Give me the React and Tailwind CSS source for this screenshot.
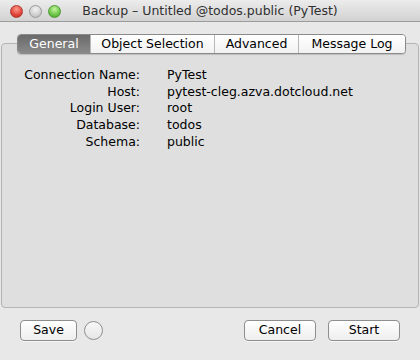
import React from "react"

const font = { fontFamily: '"Lucida Grande", "DejaVu Sans", "Liberation Sans", sans-serif' }

const tabs = ["General", "Object Selection", "Advanced", "Message Log"]
const tabWidths = ["w-[72px]", "w-[124px]", "w-[84px]", "w-[107px]"]

const rows = [
  ["Connection Name:", "PyTest"],
  ["Host:", "pytest-cleg.azva.dotcloud.net"],
  ["Login User:", "root"],
  ["Database:", "todos"],
  ["Schema:", "public"],
]

function Button({ children, className }) {
  return (
    <button className={`h-[21px] rounded-[4px] border border-[#8e8e8e] bg-gradient-to-b from-white to-[#eeeeee] text-[12.5px] text-black shadow-[0_1px_0_rgba(255,255,255,0.6)] ${className}`}>
      {children}
    </button>
  )
}

export default function App() {
  return (
    <div className="w-[420px] h-[360px] bg-[#e8e8e8] flex flex-col overflow-hidden" style={font}>
      {/* title bar */}
      <div className="h-[22px] shrink-0 relative flex items-center bg-gradient-to-b from-[#ececec] to-[#d2d2d2] border-b border-[#9c9c9c]">
        <div className="flex items-center gap-[6px] pl-[10px] pt-[1px]">
          <div className="w-[13px] h-[13px] rounded-full border border-[#b03a32] bg-[radial-gradient(circle_at_50%_30%,#ff9a8c,#e0443a_60%,#b8231c)]" />
          <div className="w-[13px] h-[13px] rounded-full border border-[#9a9a9a] bg-[radial-gradient(circle_at_50%_30%,#f4f4f4,#cfcfcf_60%,#b4b4b4)]" />
          <div className="w-[13px] h-[13px] rounded-full border border-[#4f9a35] bg-[radial-gradient(circle_at_50%_30%,#c6f5a0,#6cc448_60%,#3e9a22)]" />
        </div>
        <div className="absolute inset-0 flex items-center justify-center text-[12.5px] text-[#303030] pt-[1px]">
          Backup – Untitled @todos.public (PyTest)
        </div>
      </div>

      {/* tabs */}
      <div className="relative z-10 flex pl-[17px] pt-[12px]">
        <div className="flex h-[20px] rounded-[4px] border border-[#8a8a8a] overflow-hidden shadow-[0_1px_1px_rgba(0,0,0,0.15)]">
          {tabs.map((t, i) => (
            <div
              key={t}
              className={`${tabWidths[i]} flex items-center justify-center text-[12.5px] ${i > 0 ? "border-l border-[#b8b8b8]" : ""} ${i === 0 ? "bg-gradient-to-b from-[#6a6a6a] to-[#8a8a8a] text-white" : "bg-gradient-to-b from-white to-[#f2f2f2] text-black"}`}
            >
              {t}
            </div>
          ))}
        </div>
      </div>

      {/* box */}
      <div className="-mt-[11px] mx-[1px] h-[265px] rounded-[4px] border border-[#b4b4b4] bg-[#dfdfdf] pt-[23px] pl-[21px]">
        <div className="grid grid-cols-[117px_1fr] gap-x-[27px] text-[12.5px] text-black leading-[16.7px]">
          {rows.map(([k, v]) => (
            <React.Fragment key={k}>
              <div className="text-right">{k}</div>
              <div>{v}</div>
            </React.Fragment>
          ))}
        </div>
      </div>

      {/* buttons */}
      <div className="flex items-center px-[20px] pt-[12px]">
        <Button className="w-[57px]">Save</Button>
        <div className="ml-[7px] w-[19px] h-[19px] rounded-full border border-[#8e8e8e] bg-gradient-to-b from-[#f8f8f8] to-[#e6e6e6]" />
        <div className="flex-1" />
        <Button className="w-[72px]">Cancel</Button>
        <Button className="w-[72px] ml-[12px]">Start</Button>
      </div>
    </div>
  )
}
